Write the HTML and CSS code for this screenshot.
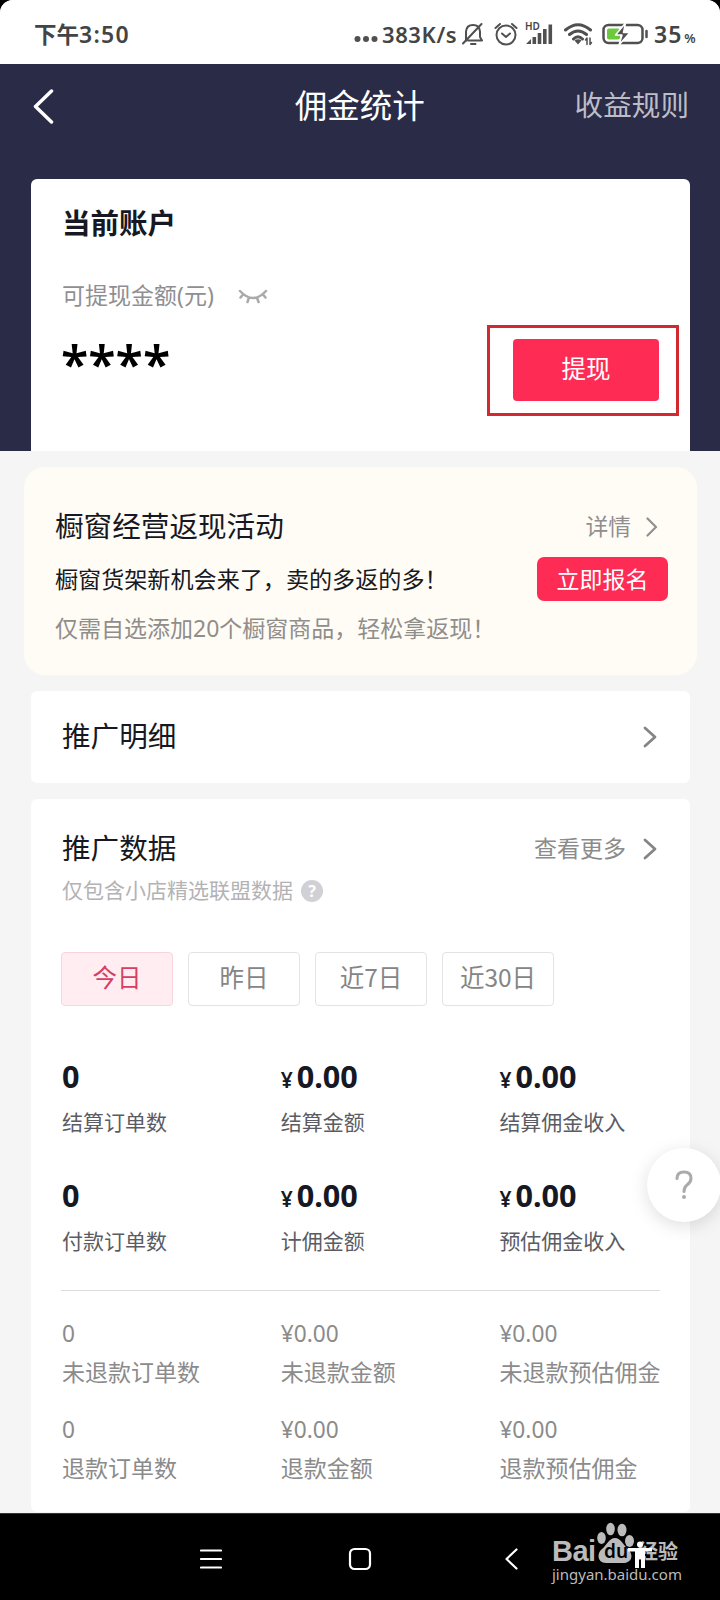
FILE: index.html
```
<!DOCTYPE html>
<html lang="zh-CN">
<head>
<meta charset="utf-8">
<title>佣金统计</title>
<link rel="stylesheet" href="styles.css">
</head>
<body>
<div class="phone">
  <div class="screen">
    <div class="status">
      <span class="clock">下午<b>3:50</b></span>
      <svg class="dots" width="24" height="8" viewBox="0 0 24 8"><circle cx="3.5" cy="4" r="3"/><circle cx="12" cy="4" r="3"/><circle cx="20.5" cy="4" r="3"/></svg>
      <span class="speed">383K/s</span>
      <svg class="ico bell" width="22" height="24" viewBox="0 0 22 24"><path d="M4 19V9.500Q4.500 3 11 3Q17.500 3 18 9.500V15L20 18.500H6M9 22H13.500M1 21.500L19.500 2"/></svg>
      <svg class="ico alarm" width="24" height="24" viewBox="0 0 24 24"><circle cx="12" cy="13" r="9.500"/><path d="M1.500 6L6 2M22.500 6L18 2M8 11.500L12 15L16 11.500"/></svg>
      <div class="cell">
        <span class="hd">HD</span>
        <svg width="28" height="24" viewBox="0 0 28 24"><path d="M1 22L6 17V22ZM7.500 15h3.600v7h-3.600zM12.700 11h3.600v11h-3.600zM18 7h3.600v15h-3.600zM23.500 2.500h3.600v19.500h-3.600z"/></svg>
      </div>
      <svg class="ico wifi" width="30" height="24" viewBox="0 0 30 24"><path d="M1.500 8Q14 -2.500 26.500 8M5.500 12.500Q14 5.500 22.500 12.500M9.500 17Q14 12.500 18.500 17"/><path class="fill" d="M10.500 18.500Q14 16 17.500 18.500L14 22.500Z"/><path class="thin" d="M23 22.500V16L21.500 18M26 16V22.500L27.500 20.500"/></svg>
      <svg class="ico battery" width="46" height="24" viewBox="0 0 46 24"><rect x="1.500" y="3" width="39" height="18" rx="5"/><rect class="green" x="5" y="6.500" width="13" height="11" rx="2"/><path class="cap" d="M44.500 9V15"/><path class="bolt" d="M23.500 1L13.500 13H20L17 23L28 10.500H21.500Z"/></svg>
      <span class="pct">35<small>%</small></span>
    </div>

    <div class="hero">
      <div class="navbar">
        <svg class="back" width="24" height="36" viewBox="0 0 24 36"><path d="M19.500 3L3.500 18.500L19.500 34"/></svg>
        <h1>佣金统计</h1>
        <span class="rules">收益规则</span>
      </div>
      <section class="account">
        <h2>当前账户</h2>
        <div class="avail">可提现金额(元)
          <svg width="30" height="18" viewBox="0 0 30 18"><path d="M2 3Q15 17 28 3M5 6.500L2.500 9.500M11 9.500L9.500 14M19 9.500L20.500 14M25 6.500L27.500 9.500"/></svg>
        </div>
        <div class="balance">
          <span class="stars">****</span>
          <div class="withdraw">提现<i class="mark"></i></div>
        </div>
      </section>
    </div>

    <section class="promo">
      <div class="row"><h3>橱窗经营返现活动</h3><span class="more">详情<svg width="12" height="20" viewBox="0 0 12 20"><path d="M1.500 1.500L10 10L1.500 18.500"/></svg></span></div>
      <div class="row line2"><span>橱窗货架新机会来了，卖的多返的多！</span><span class="join">立即报名</span></div>
      <p>仅需自选添加20个橱窗商品，轻松拿返现！</p>
    </section>

    <section class="card detail">
      <h3>推广明细</h3>
      <svg class="chev" width="14" height="22" viewBox="0 0 14 22"><path d="M2 2L12 11L2 20"/></svg>
    </section>

    <section class="card data">
      <div class="head"><h3>推广数据</h3><span>查看更多</span><svg class="chev" width="14" height="22" viewBox="0 0 14 22"><path d="M2 2L12 11L2 20"/></svg></div>
      <div class="note">仅包含小店精选联盟数据<b>?</b></div>
      <div class="tabs"><span class="on">今日</span><span>昨日</span><span>近7日</span><span>近30日</span></div>
      <div class="grid">
        <div><strong>0</strong><em>结算订单数</em></div>
        <div><strong><small>¥</small>0.00</strong><em>结算金额</em></div>
        <div><strong><small>¥</small>0.00</strong><em>结算佣金收入</em></div>
        <div><strong>0</strong><em>付款订单数</em></div>
        <div><strong><small>¥</small>0.00</strong><em>计佣金额</em></div>
        <div><strong><small>¥</small>0.00</strong><em>预估佣金收入</em></div>
      </div>
      <div class="grid refund">
        <div><span>0</span><em>未退款订单数</em></div>
        <div><span>¥0.00</span><em>未退款金额</em></div>
        <div><span>¥0.00</span><em>未退款预估佣金</em></div>
        <div><span>0</span><em>退款订单数</em></div>
        <div><span>¥0.00</span><em>退款金额</em></div>
        <div><span>¥0.00</span><em>退款预估佣金</em></div>
      </div>
    </section>
  </div>

  <div class="help"><svg width="20" height="32" viewBox="0 0 20 32"><path d="M3 9.500Q3 3 10 3Q17 3 17 9.500Q17 13 13 16Q10 18 10 22.500"/><circle cx="10" cy="28" r="2"/></svg></div>

  <div class="sysbar">
    <svg width="22" height="22" viewBox="0 0 22 22"><path d="M1 2.500H21M1 11H21M1 19.500H21"/></svg>
    <svg class="home" width="24" height="24" viewBox="0 0 24 24"><rect x="2" y="2" width="20" height="20" rx="4.500"/></svg>
    <svg width="14" height="22" viewBox="0 0 14 22"><path d="M12.500 1.500L2.500 11L12.500 20.500"/></svg>
    <div class="wm">
      <div class="brand">
        <span class="bai">Bai</span>
        <div class="paw">
          <svg width="38" height="42" viewBox="0 0 38 42"><ellipse cx="4.500" cy="16" rx="4.300" ry="6"/><ellipse cx="13.500" cy="7" rx="4.300" ry="6.300"/><ellipse cx="25" cy="8" rx="4.500" ry="6.300"/><ellipse cx="32.500" cy="19" rx="4.500" ry="6"/><path d="M18 16C12 16 10 23 5 27C-1 32 1 41 9 41H26C35 41 37 33 31 27C26 23 24 16 18 16Z"/></svg>
          <span>du</span>
        </div>
        <span class="jy">经验</span>
        <svg class="person" width="26" height="28" viewBox="0 0 26 28"><circle cx="13" cy="3.500" r="3"/><path d="M1 7H25V10.500H18V27H14V18H12V27H8V10.500H1Z"/></svg>
      </div>
      <span class="url">jingyan.baidu.com</span>
    </div>
  </div>
</div>
</body>
</html>
```
FILE: styles.css
```
* { box-sizing: border-box; margin: 0; padding: 0; font-style: normal; }
body { background: #000; font-family: "Noto Sans", "Noto Sans CJK SC", sans-serif; color: #161823; }
h1, h2, h3 { font-weight: 400; }
svg { display: block; flex: none; fill: none; stroke-linecap: round; stroke-linejoin: round; }
.phone { position: relative; width: 720px; height: 1600px; background: #000; overflow: hidden; }
.screen { height: 1513px; background: #f5f5f5; border-radius: 13px 13px 0 0; overflow: hidden; display: flex; flex-direction: column; }

/* status bar */
.status { height: 64px; background: #fff; display: flex; align-items: center; padding: 4px 0 0 34px; color: #444; font-size: 22px; font-weight: 600; white-space: nowrap; flex: none; }
.clock { width: 320px; line-height: 30px; font-weight: 700; font-size: 22.500px; }
.clock b { font-weight: 600; font-size: 23px; letter-spacing: 1.300px; }
.dots { fill: #505050; margin-top: 9px; }
.speed { width: 80px; margin-left: 4px; font-size: 22px; letter-spacing: .6px; }
.ico { stroke: #505050; stroke-width: 2; }
.alarm { margin-left: 10px; }
.cell { position: relative; margin-left: 7px; }
.cell svg { fill: #505050; }
.hd { position: absolute; left: 0; top: -1px; font-size: 10px; line-height: 10px; }
.wifi { margin-left: 11px; stroke-width: 3; }
.wifi .fill { fill: #505050; stroke: none; }
.wifi .thin { stroke-width: 1.500; }
.battery { margin-left: 8px; stroke-width: 2.500; }
.green { fill: #6cc93c; stroke: none; }
.bolt { fill: #505050; stroke: #fff; stroke-width: 1.500; }
.pct { margin-left: 6px; font-size: 23px; letter-spacing: 1px; }
.pct small { font-size: 13px; margin-left: 2px; }

/* header and account */
.hero { height: 387px; background: #292b47; padding: 0 30px 0 31px; flex: none; display: flex; flex-direction: column; }
.navbar { height: 115px; padding: 22px 1px 53px 1px; display: flex; justify-content: space-between; align-items: center; color: #fff; }
.navbar h1 { font-size: 32.500px; line-height: 40px; margin: -1px 0 0 89px; }
.back { stroke: #fff; stroke-width: 3.500; margin-top: -1px; }
.rules { font-size: 28.600px; line-height: 40px; color: #bdbdc7; margin-top: -3px; }
.account { height: 272px; background: #fff; border-radius: 6px 6px 0 0; padding: 24px 31px 0 31px; }
.account h2 { font-size: 28.500px; line-height: 40px; font-weight: 600; }
.avail { display: flex; align-items: center; gap: 24px; font-size: 23px; line-height: 34px; margin-top: 35px; color: #8f8f93; }
.avail svg { stroke: #aaa; stroke-width: 2.500; margin-top: 3px; }
.balance { display: flex; justify-content: space-between; margin-top: 28px; }
.stars { color: #000; font-size: 50px; line-height: 62px; font-weight: 600; margin: -8px 0 0 -1px; }
.withdraw { position: relative; width: 146px; height: 62px; background: #fe2c55; color: #fff; border-radius: 4px; font-size: 24.500px; line-height: 59px; text-align: center; margin-top: -1px; }
.mark { position: absolute; left: -26px; top: -14px; width: 192px; height: 91px; border: 3.500px solid #d2282f; }

/* promo */
.promo { height: 208px; margin: 16px 23px 0 24px; padding: 39px 29px 0 31px; background: #fffcf6; border-radius: 21px; flex: none; }
.row { display: flex; justify-content: space-between; align-items: center; }
h3 { font-size: 28.600px; line-height: 38px; padding-bottom: 2px; }
.more { display: flex; align-items: center; gap: 15px; margin-right: 10px; font-size: 22.800px; line-height: 40px; color: #8f8f8f; padding-top: 1px; }
.more svg { stroke: #909090; stroke-width: 2.200; }
.line2 { height: 44px; margin-top: 10px; font-size: 23.100px; line-height: 46px; white-space: nowrap; }
.join { width: 131px; height: 44px; background: #fe2c55; color: #fff; border-radius: 7px; text-align: center; font-size: 23px; line-height: 45px; }
.promo p { font-size: 23px; line-height: 34px; margin-top: 10px; color: #908e8b; }

/* cards */
.card { margin: 16px 30px 0 31px; background: #fff; border-radius: 6px; flex: none; }
.chev { stroke: #858585; stroke-width: 2.800; }
.detail { height: 92px; padding: 0 33px 0 31px; display: flex; align-items: center; justify-content: space-between; }
.data { height: 713px; padding: 29px 30px 0 30px; }
.head { display: flex; align-items: center; padding: 0 3px 0 1px; height: 40px; }
.head h3 { padding: 0; }
.head .chev { margin-top: 2px; }
.head span { margin: 0 17px 0 auto; font-size: 23px; color: #8b8b8b; line-height: 34px; }
.note { display: flex; align-items: center; gap: 8px; padding-left: 1px; margin-top: 7px; font-size: 21px; line-height: 30px; color: #b3b3b5; }
.note b { width: 22px; height: 22px; border-radius: 50%; background: #d1d1d5; color: #fff; font-size: 16px; line-height: 22px; text-align: center; margin-top: 2px; }
.tabs { display: flex; gap: 15px; margin-top: 47px; }
.tabs span { width: 112px; height: 54px; border: 1px solid #e3e3e3; border-radius: 4px; font-size: 24.500px; line-height: 47px; text-align: center; color: #858585; font-family: "Noto Sans CJK SC", sans-serif; }
.tabs .on { background: #ffedf1; border-color: #f8d5dd; color: #d63e64; }
.grid { display: grid; grid-template-columns: 218.700px 218.700px 1fr; padding: 50px 0 0 1px; height: 285px; grid-auto-rows: 119px; border-bottom: 1px solid #dcdcdc; white-space: nowrap; }
.grid strong { display: block; height: 40px; font-size: 30.600px; line-height: 41px; font-weight: 700; }
.grid small { font-size: 21px; line-height: 1; margin-right: 4px; font-weight: 600; }
.grid em { display: block; font-size: 21px; line-height: 30px; margin-top: 11px; color: #5b5c63; }
.refund { border: 0; padding-top: 26px; height: 220px; grid-auto-rows: 96px; color: #8b8b8b; }
.refund span { display: block; font-size: 22.700px; line-height: 34px; }
.refund em { font-size: 23px; line-height: 34px; margin-top: 4px; color: #8b8b8b; }

/* floating help */
.help { position: absolute; left: 647px; top: 1148px; width: 74px; height: 74px; border-radius: 50%; background: #fff; box-shadow: 0 4px 18px rgba(0,0,0,.13); display: flex; align-items: center; justify-content: center; }
.help svg { stroke: #aaa; stroke-width: 3; }
.help circle { fill: #aaa; stroke: none; }

/* system bar */
.sysbar { position: relative; height: 87px; display: flex; justify-content: space-between; align-items: center; padding: 4px 202px 0 200px; background: #000; border-top: 1px solid #333; }
.sysbar > svg { stroke: #fff; stroke-width: 2.200; }
.sysbar > .home { margin: 0 3px 0 -3px; }
.wm { position: absolute; left: 552px; top: 8px; width: 132px; color: #bbb; white-space: nowrap; }
.brand { position: relative; display: flex; height: 42px; }
.wm svg { fill: #bbb; }
.bai { width: 45px; font-family: "Liberation Sans", sans-serif; font-size: 29px; line-height: 30px; padding-top: 14px; font-weight: 700; letter-spacing: -.5px; }
.paw { position: relative; width: 38px; }
.paw span { position: absolute; left: 7px; top: 19px; font-size: 19px; line-height: 20px; font-weight: 600; color: #000; }
.jy { font-size: 20px; line-height: 24px; padding-top: 18px; font-weight: 700; margin-left: 3px; }
.wm .person { position: absolute; left: 75px; top: 19px; fill: #fff; }
.url { display: block; font-size: 15px; line-height: 21px; }
```
